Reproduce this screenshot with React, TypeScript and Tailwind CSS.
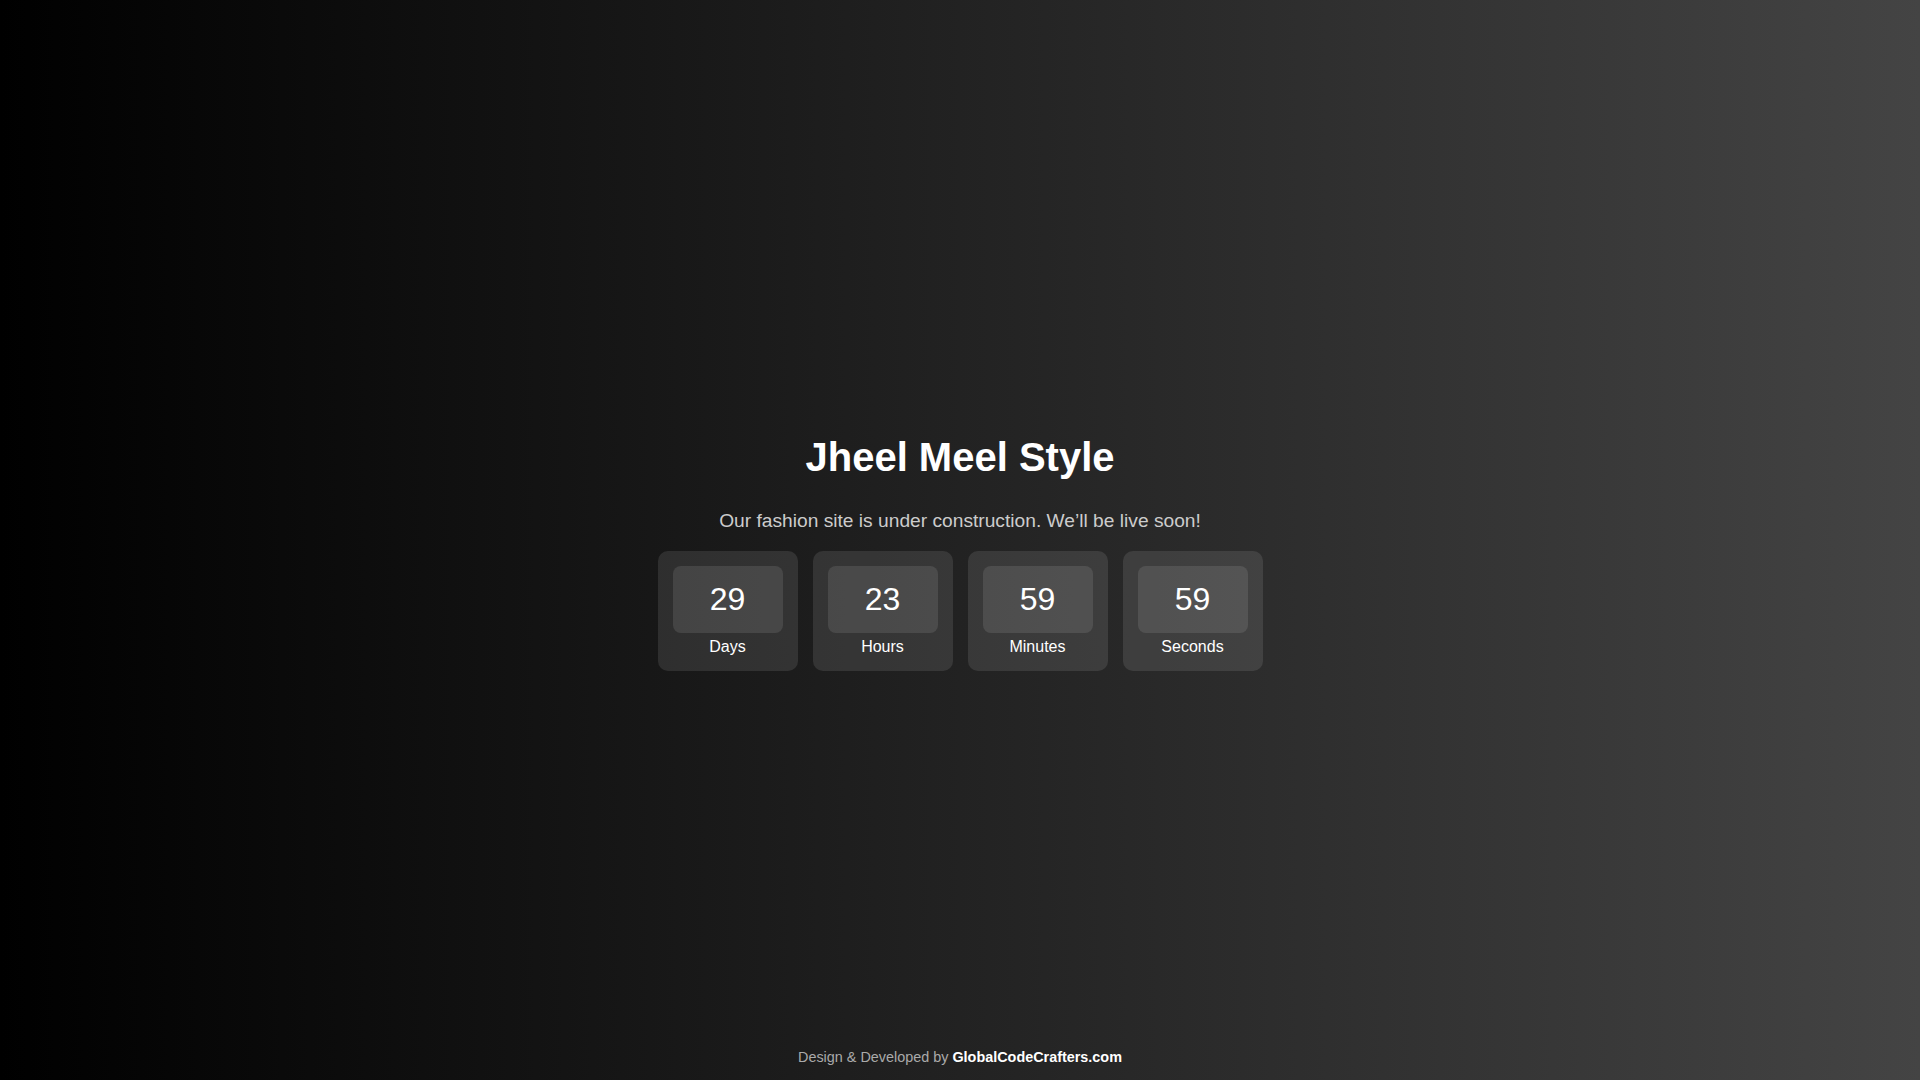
const units = [
  { value: '29', label: 'Days' },
  { value: '23', label: 'Hours' },
  { value: '59', label: 'Minutes' },
  { value: '59', label: 'Seconds' },
]

export default function App() {
  return (
    <main className="flex h-screen flex-col bg-[linear-gradient(to_right,#000000,#444444)] font-['Liberation_Sans',Arial,sans-serif] text-white">
      <div className="flex flex-1 flex-col items-center justify-center pt-[44px] text-center">
        <h1 className="mb-[30px] mt-[24px] text-[40px] font-bold leading-[46px]">Jheel Meel Style</h1>
        <p className="mb-[19px] text-[19.2px] leading-[22px] text-[#cccccc]">
          Our fashion site is under construction. We’ll be live soon!
        </p>
        <div className="flex gap-[15px]">
          {units.map((u) => (
            <CountBox key={u.label} value={u.value} label={u.label} />
          ))}
        </div>
      </div>
      <footer className="flex h-[44px] items-center justify-center text-[14.4px] text-[#aaaaaa]">
        <span>
          Design &amp; Developed by <b className="font-bold text-white">GlobalCodeCrafters.com</b>
        </span>
      </footer>
    </main>
  )
}

function CountBox({ value, label }: { value: string; label: string }) {
  return (
    <div className="w-[140px] rounded-[10px] bg-white/10 p-[15px]">
      <div className="flex h-[67px] items-center justify-center rounded-[8px] bg-white/10 text-[32px] leading-none">
        {value}
      </div>
      <div className="mt-[5px] text-[16px] leading-[18px]">{label}</div>
    </div>
  )
}
